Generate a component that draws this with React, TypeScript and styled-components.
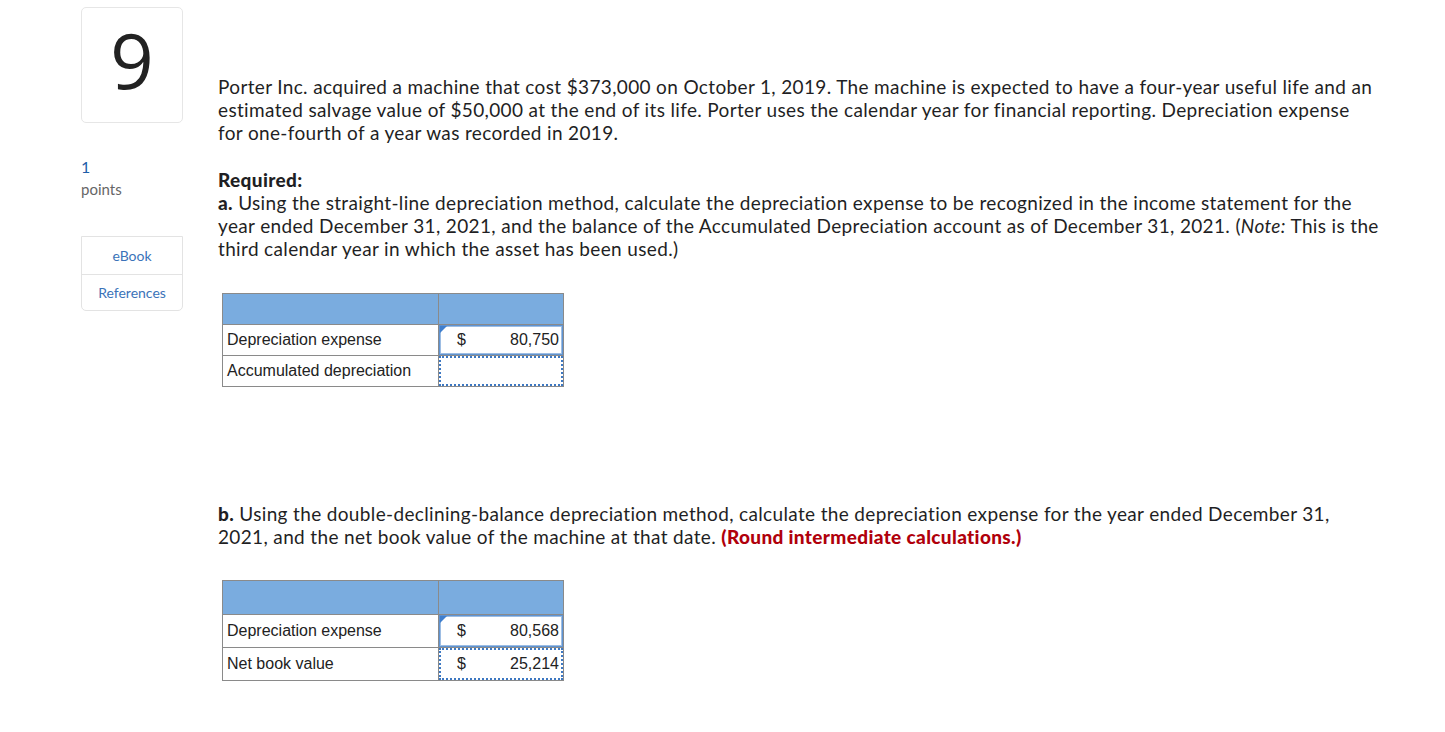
import React from "react";
import styled, { createGlobalStyle } from "styled-components";

const Global = createGlobalStyle`
  html, body { margin: 0; padding: 0; background: #fff; }
  body { font-family: Lato, "Open Sans", sans-serif; color: #222; }
`;

const Page = styled.div`
  display: flex;
  align-items: flex-start;
  padding: 7px 0 0 81px;
  gap: 35px;
`;

const Side = styled.aside`
  width: 102px;
  display: flex;
  flex-direction: column;
`;

const NumberBox = styled.div`
  height: 116px;
  border: 1px solid #e6e6e6;
  border-radius: 5px;
  display: flex;
  align-items: center;
  justify-content: center;
  font-family: "Open Sans", sans-serif;
  font-size: 76px;
  line-height: 1;
  color: #222;
  padding-bottom: 10px;
  box-sizing: border-box;
`;

const Points = styled.div`
  margin-top: 33px;
  font-size: 15px;
  line-height: 22px;
  color: #666;
`;

const PointValue = styled.div`
  color: #1f5ea8;
  font-size: 16px;
`;

const Links = styled.div`
  margin-top: 36px;
  border: 1px solid #e3e3e3;
  border-radius: 0 0 5px 5px;
  display: flex;
  flex-direction: column;
`;

const LinkRow = styled.div<{ $last?: boolean }>`
  height: ${(p) => (p.$last ? 35 : 37)}px;
  display: flex;
  align-items: center;
  justify-content: center;
  font-size: 14px;
  color: #3b73b9;
  border-top: ${(p) => (p.$last ? "1px solid #e3e3e3" : "none")};
`;

const Main = styled.main`
  width: 1220px;
  padding-top: 68px;
`;

const Para = styled.p`
  margin: 0;
  font-size: 19px;
  letter-spacing: 0.35px;
  line-height: 23px;
  color: #1f1f24;
  white-space: nowrap;
`;

const Required = styled(Para)`
  margin-top: 24px;
`;

const Label = styled.b`
  font-weight: 900;
`;

const Red = styled.b`
  color: #b0000b;
  font-weight: 900;
`;

const Table = styled.table`
  margin-left: 4px;
  border-collapse: collapse;
  font-family: "Liberation Sans", Arial, sans-serif;
  font-size: 16px;
  color: #222;
`;

const HeadCell = styled.td<{ $w: number; $h: number }>`
  background: #7aacdf;
  border: 1px solid #8a8a8a;
  width: ${(p) => p.$w}px;
  height: ${(p) => p.$h}px;
  padding: 0;
`;

const LabelCell = styled.td<{ $h: number }>`
  border: 1px solid #8a8a8a;
  height: ${(p) => p.$h}px;
  padding: 0 4px;
  white-space: nowrap;
  box-sizing: border-box;
`;

const ValueCell = styled.td`
  padding: 0;
  border: 1px solid #8a8a8a;
  position: relative;
`;

const Input = styled.div<{ $dotted?: boolean; $h: number }>`
  height: ${(p) => p.$h}px;
  box-sizing: border-box;
  border: ${(p) => (p.$dotted ? "2px dotted #3d78c2" : "2px solid #9dbde3")};
  outline: ${(p) => (p.$dotted ? "none" : "1px solid #5f93d1")};
  outline-offset: -1px;
  background: #fff;
  display: flex;
  align-items: center;
  justify-content: space-between;
  padding: 0 2px 0 16px;
  position: relative;
`;

const Flag = styled.span`
  position: absolute;
  top: -1px;
  left: -1px;
  width: 0;
  height: 0;
  border-top: 7px solid #3f7fce;
  border-right: 7px solid transparent;
`;

const Gap = styled.div<{ $h: number }>`
  height: ${(p) => p.$h}px;
`;

type Row = { label: string; value?: string; solid?: boolean };

function Grid({ rows, rowH, headH }: { rows: Row[]; rowH: number; headH: number }) {
  return (
    <Table>
      <tbody>
        <tr>
          <HeadCell $w={215} $h={headH} />
          <HeadCell $w={124} $h={headH} />
        </tr>
        {rows.map((r) => (
          <tr key={r.label}>
            <LabelCell $h={rowH}>{r.label}</LabelCell>
            <ValueCell>
              <Input $dotted={!r.solid} $h={rowH - 1}>
                {r.solid && <Flag />}
                <span>{r.value ? "$" : ""}</span>
                <span>{r.value ?? ""}</span>
              </Input>
            </ValueCell>
          </tr>
        ))}
      </tbody>
    </Table>
  );
}

export default function App() {
  return (
    <>
      <Global />
      <Page>
        <Side>
          <NumberBox>9</NumberBox>
          <Points>
            <PointValue>1</PointValue>
            points
          </Points>
          <Links>
            <LinkRow>eBook</LinkRow>
            <LinkRow $last>References</LinkRow>
          </Links>
        </Side>
        <Main>
          <Para>
            Porter Inc. acquired a machine that cost $373,000 on October 1, 2019. The machine is expected to have a four-year useful life and an
            <br />
            estimated salvage value of $50,000 at the end of its life. Porter uses the calendar year for financial reporting. Depreciation expense
            <br />
            for one-fourth of a year was recorded in 2019.
          </Para>
          <Required>
            <Label>Required:</Label>
            <br />
            <Label>a.</Label> Using the straight-line depreciation method, calculate the depreciation expense to be recognized in the income statement for the
            <br />
            year ended December 31, 2021, and the balance of the Accumulated Depreciation account as of December 31, 2021. (<i>Note:</i> This is the
            <br />
            third calendar year in which the asset has been used.)
          </Required>
          <Gap $h={33} />
          <Grid
            headH={30}
            rowH={31}
            rows={[
              { label: "Depreciation expense", value: "80,750", solid: true },
              { label: "Accumulated depreciation" },
            ]}
          />
          <Gap $h={115} />
          <Para>
            <Label>b.</Label> Using the double-declining-balance depreciation method, calculate the depreciation expense for the year ended December 31,
            <br />
            2021, and the net book value of the machine at that date. <Red>(Round intermediate calculations.)</Red>
          </Para>
          <Gap $h={32} />
          <Grid
            headH={33}
            rowH={33}
            rows={[
              { label: "Depreciation expense", value: "80,568", solid: true },
              { label: "Net book value", value: "25,214" },
            ]}
          />
        </Main>
      </Page>
    </>
  );
}
